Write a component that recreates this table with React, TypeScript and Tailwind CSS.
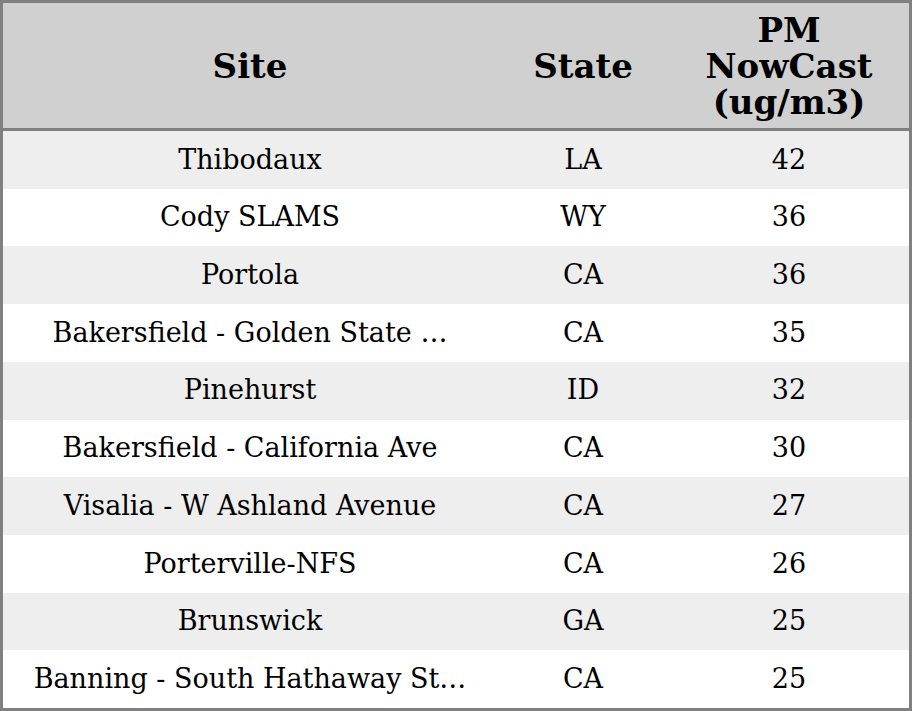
import React from 'react';

const rows = [
  { site: 'Thibodaux', state: 'LA', pm: 42 },
  { site: 'Cody SLAMS', state: 'WY', pm: 36 },
  { site: 'Portola', state: 'CA', pm: 36 },
  { site: 'Bakersfield - Golden State …', state: 'CA', pm: 35 },
  { site: 'Pinehurst', state: 'ID', pm: 32 },
  { site: 'Bakersfield - California Ave', state: 'CA', pm: 30 },
  { site: 'Visalia - W Ashland Avenue', state: 'CA', pm: 27 },
  { site: 'Porterville-NFS', state: 'CA', pm: 26 },
  { site: 'Brunswick', state: 'GA', pm: 25 },
  { site: 'Banning - South Hathaway St…', state: 'CA', pm: 25 },
];

export default function App() {
  return (
    <div
      className="w-[912px] h-[711px] border-[3px] border-[#808080] bg-white text-black flex flex-col overflow-hidden"
      style={{ fontFamily: '"DejaVu Serif", serif' }}
    >
      <div className="h-[128px] shrink-0 grid grid-cols-[494px_172px_240px] items-center bg-[#d0d0d0] border-b-[3px] border-[#808080] text-[34px] font-bold leading-[36px] text-center">
        <div>Site</div>
        <div>State</div>
        <div>PM<br />NowCast<br />(ug/m3)</div>
      </div>
      <div className="flex-1 flex flex-col">
        {rows.map((r, i) => (
          <div
            key={i}
            className={`flex-1 grid grid-cols-[494px_172px_240px] items-center text-center text-[27px] ${i % 2 === 0 ? 'bg-[#eeeeee]' : 'bg-white'}`}
          >
            <div className="whitespace-nowrap">{r.site}</div>
            <div>{r.state}</div>
            <div>{r.pm}</div>
          </div>
        ))}
      </div>
    </div>
  );
}
